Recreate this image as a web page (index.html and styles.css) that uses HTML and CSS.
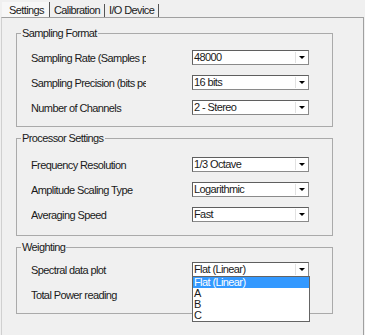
FILE: index.html
```html
<!DOCTYPE html>
<html lang="en">
<head>
    <meta charset="UTF-8">
    <meta name="viewport" content="width=device-width, initial-scale=1.0">
    <title>Settings</title>
    <link rel="stylesheet" href="styles.css">
</head>
<body>
    <div class="tabs">
        <span class="tab active">Settings</span>
        <span class="tab">Calibration</span>
        <span class="tab">I/O Device</span>
    </div>

    <div class="panel">
        <fieldset class="group group-sampling">
            <legend>Sampling Format</legend>
            <div class="rows">
                <div class="row">
                    <span class="label">Sampling Rate (Samples per</span>
                    <div class="combo"><span class="value">48000</span><span class="btn"><i class="arrow"></i></span></div>
                </div>
                <div class="row">
                    <span class="label">Sampling Precision (bits per</span>
                    <div class="combo"><span class="value">16 bits</span><span class="btn"><i class="arrow"></i></span></div>
                </div>
                <div class="row">
                    <span class="label">Number of Channels</span>
                    <div class="combo"><span class="value">2 - Stereo</span><span class="btn"><i class="arrow"></i></span></div>
                </div>
            </div>
        </fieldset>

        <fieldset class="group group-processor">
            <legend>Processor Settings</legend>
            <div class="rows">
                <div class="row">
                    <span class="label">Frequency Resolution</span>
                    <div class="combo"><span class="value">1/3 Octave</span><span class="btn"><i class="arrow"></i></span></div>
                </div>
                <div class="row">
                    <span class="label">Amplitude Scaling Type</span>
                    <div class="combo"><span class="value">Logarithmic</span><span class="btn"><i class="arrow"></i></span></div>
                </div>
                <div class="row">
                    <span class="label">Averaging Speed</span>
                    <div class="combo"><span class="value">Fast</span><span class="btn"><i class="arrow"></i></span></div>
                </div>
            </div>
        </fieldset>

        <fieldset class="group group-weighting">
            <legend>Weighting</legend>
            <div class="rows">
                <div class="row">
                    <span class="label">Spectral data plot</span>
                    <div class="combo open">
                        <span class="value">Flat (Linear)</span><span class="btn"><i class="arrow"></i></span>
                        <ul class="dropdown">
                            <li class="selected">Flat (Linear)</li>
                            <li>A</li>
                            <li>B</li>
                            <li>C</li>
                        </ul>
                    </div>
                </div>
                <div class="row">
                    <span class="label">Total Power reading</span>
                </div>
            </div>
        </fieldset>
    </div>
</body>
</html>
```

FILE: styles.css
```css
body {
    margin: 0;
    width: 365px;
    height: 335px;
    overflow: hidden;
    background-color: #f0f0f0;
    font-family: "Liberation Sans", Arial, sans-serif;
    font-size: 11px;
    letter-spacing: -0.6px;
    color: #1a1a1a;
}
.tabs {
    display: flex;
    align-items: flex-end;
    height: 17px;
    padding-left: 2px;
}
.tab {
    height: 13px;
    line-height: 13px;
    padding: 0 4px 0 4px;
    border-right: 1px solid #555;
}
.tab.active {
    height: 15px;
    line-height: 17px;
    padding: 0 5px 0 7px;
    background-color: #f7f7f7;
}
.panel {
    margin-left: 1px;
    width: 363px;
    height: 330px;
    padding: 9px 0 0 14px;
    box-sizing: border-box;
    border: 1px solid #a0a0a0;
    border-left-color: #d0d0d0;
    border-bottom: none;
}
.group {
    width: 317px;
    box-sizing: border-box;
    margin: 0;
    padding: 11px 0 11px 4px;
    border: 1px solid #aaa;
}
.group legend {
    padding: 0 1px;
    line-height: 12px;
    height: 12px;
}
.group-processor {
    margin-top: 5px;
    padding-top: 13px;
    padding-bottom: 13px;
}
.group-weighting {
    margin-top: 5px;
    padding-top: 9px;
    padding-bottom: 11px;
}
.rows {
    display: flex;
    flex-direction: column;
    gap: 10px;
    padding-left: 10px;
}
.row {
    display: grid;
    grid-template-columns: 115px 117px;
    column-gap: 46px;
    align-items: center;
    height: 15px;
}
.label {
    white-space: nowrap;
    overflow: hidden;
}
.combo {
    position: relative;
    display: flex;
    height: 15px;
    box-sizing: border-box;
    background-color: #fff;
    border: 1px solid #8a8a8a;
    border-top-color: #5f5f5f;
    border-left-color: #5f5f5f;
}
.value {
    flex: 1;
    padding-left: 1px;
    line-height: 13px;
    white-space: nowrap;
}
.btn {
    width: 11px;
    margin: 1px 1px 1px 0;
    border-left: 1px solid #e2e2e2;
    display: flex;
    align-items: center;
    justify-content: center;
}
.arrow {
    width: 0;
    height: 0;
    border-left: 3px solid transparent;
    border-right: 3px solid transparent;
    border-top: 3px solid #000;
}
.dropdown {
    position: absolute;
    top: 13px;
    left: -1px;
    width: 118px;
    box-sizing: border-box;
    margin: 0;
    padding: 0;
    list-style: none;
    background-color: #fff;
    border: 1px solid #646464;
    z-index: 2;
}
.dropdown li {
    height: 11px;
    line-height: 11px;
    padding-left: 1px;
}
.dropdown li.selected {
    background-color: #3399ff;
    color: #fff;
}
```
